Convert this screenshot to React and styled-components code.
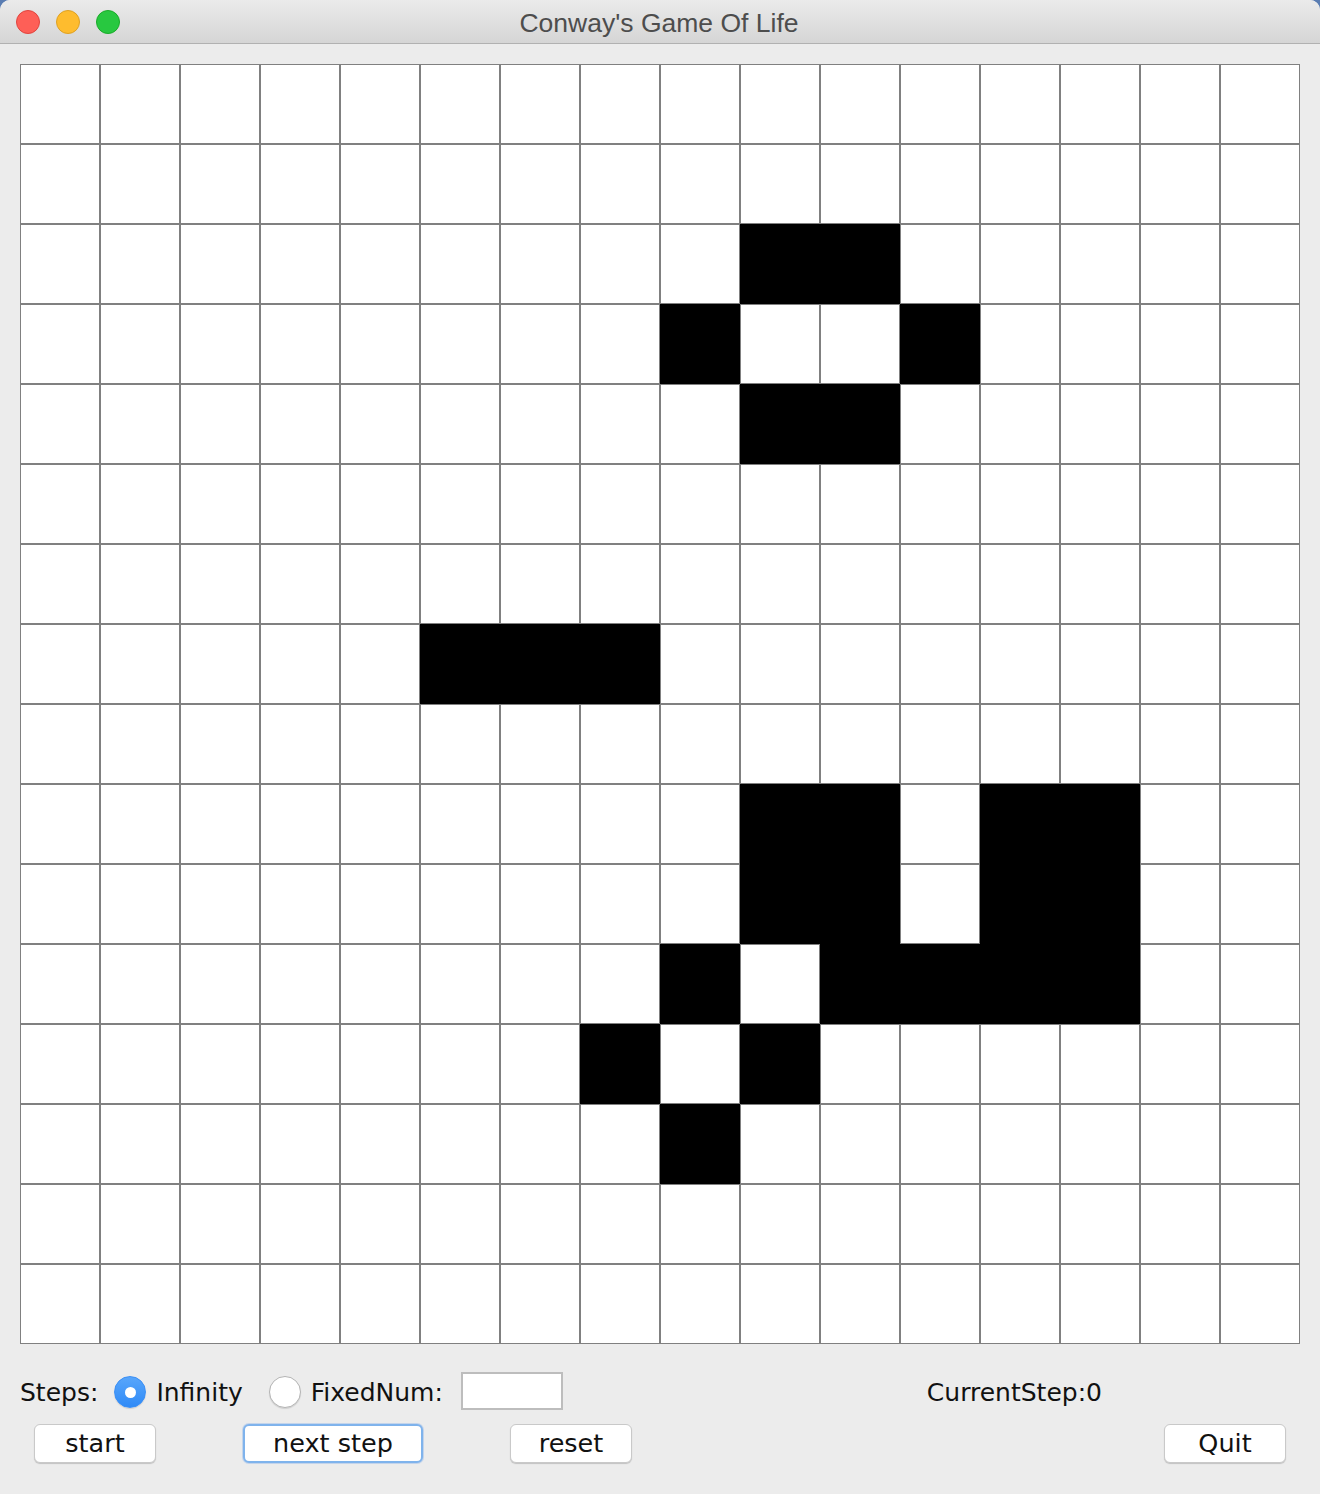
import React from "react";
import styled, { createGlobalStyle } from "styled-components";

const GlobalStyle = createGlobalStyle`
  html, body {
    margin: 0;
    padding: 0;
    background: #5a7db2;
  }
  #root {
    width: 1320px;
    height: 1494px;
  }
`;

const Window = styled.div`
  width: 1320px;
  height: 1494px;
  background: #ececec;
  border-radius: 10px 10px 0 0;
  overflow: hidden;
  display: flex;
  flex-direction: column;
  font-family: "DejaVu Sans", sans-serif;
  color: #111;
`;

const TitleBar = styled.div`
  height: 43px;
  flex: none;
  position: relative;
  display: flex;
  align-items: center;
  justify-content: center;
  background: linear-gradient(#ebebeb, #d5d5d5);
  border-bottom: 1px solid #b1b1b1;
`;

const Lights = styled.div`
  position: absolute;
  left: 16px;
  top: 10px;
  display: flex;
  gap: 16px;
`;

const Light = styled.span`
  width: 22px;
  height: 22px;
  border-radius: 50%;
  background: ${(p) => p.color};
  border: 1px solid ${(p) => p.edge};
`;

const Title = styled.span`
  font-family: "Liberation Sans", Arial, sans-serif;
  font-size: 26.5px;
  color: #4d4d4d;
  margin: 3px 0 0 -2px;
`;

const Body = styled.div`
  padding: 20px 20px 0 20px;
`;

const Board = styled.div`
  display: grid;
  grid-template-columns: repeat(16, 80px);
  grid-template-rows: repeat(16, 80px);
  width: 1280px;
  background: #fff;
`;

const Cell = styled.div`
  background: ${(p) => (p.alive ? "#000" : "#fff")};
  box-shadow: ${(p) => (p.alive ? "none" : "inset 0 0 0 1px #808080")};
`;

const Controls = styled.div`
  display: flex;
  flex-direction: column;
  padding-top: 28px;
  gap: 12px;
`;

const Row = styled.div`
  display: flex;
  align-items: center;
  height: ${(p) => p.h || 40}px;
  font-size: 25px;
`;

const Label = styled.span`
  margin-left: ${(p) => p.ml || 0}px;
  white-space: nowrap;
  line-height: 1;
`;

const Radio = styled.span`
  width: 32px;
  height: 32px;
  box-sizing: border-box;
  border-radius: 50%;
  margin-left: ${(p) => p.ml || 0}px;
  margin-right: 10px;
  display: flex;
  align-items: center;
  justify-content: center;
  flex: none;
  background: ${(p) => (p.checked ? "linear-gradient(#58a6fb, #2f8af7)" : "#fff")};
  border: 1px solid ${(p) => (p.checked ? "#3b8ff5" : "#b4b4b4")};
  box-shadow: 0 1px 1px rgba(0, 0, 0, 0.12);

  &::after {
    content: "";
    display: ${(p) => (p.checked ? "block" : "none")};
    width: 11px;
    height: 11px;
    border-radius: 50%;
    background: #fff;
  }
`;

const Field = styled.span`
  width: 102px;
  height: 38px;
  box-sizing: border-box;
  margin-left: ${(p) => p.ml || 0}px;
  margin-top: -2px;
  background: #fff;
  border: 2px solid #bdbdbd;
  flex: none;
`;

const Button = styled.button`
  width: ${(p) => p.w || 122}px;
  height: 39px;
  margin-left: ${(p) => p.ml}px;
  box-sizing: border-box;
  background: #fff;
  border: ${(p) => (p.focused ? "2px solid #7fb3ec" : "1px solid #c9c9c9")};
  border-radius: 6px;
  box-shadow: ${(p) =>
    p.focused ? "0 0 0 1px rgba(120,170,235,0.35)" : "0 1px 1px rgba(0,0,0,0.18)"};
  font-family: "DejaVu Sans", sans-serif;
  font-size: 25.5px;
  color: #111;
  padding: 0;
  line-height: 1;
  flex: none;
`;

const alive = {
  2: [9, 10],
  3: [8, 11],
  4: [9, 10],
  7: [5, 6, 7],
  9: [9, 10, 12, 13],
  10: [9, 10, 12, 13],
  11: [8, 10, 11, 12, 13],
  12: [7, 9],
  13: [8],
};

export default function App() {
  const cells = [];
  for (let r = 0; r < 16; r++) {
    for (let c = 0; c < 16; c++) {
      cells.push(<Cell key={r + "-" + c} alive={(alive[r] || []).includes(c)} />);
    }
  }

  return (
    <>
      <GlobalStyle />
      <Window>
        <TitleBar>
          <Lights>
            <Light color="#fe5f57" edge="#e0443e" />
            <Light color="#febc2e" edge="#dea123" />
            <Light color="#28c840" edge="#1aab29" />
          </Lights>
          <Title>Conway's Game Of Life</Title>
        </TitleBar>
        <Body>
          <Board>{cells}</Board>
          <Controls>
            <Row>
              <Label>Steps:</Label>
              <Radio checked ml={16} />
              <Label>Infinity</Label>
              <Radio ml={26} />
              <Label>FixedNum:</Label>
              <Field ml={18} />
              <Label ml={364}>CurrentStep:0</Label>
            </Row>
            <Row h={39}>
              <Button ml={14}>start</Button>
              <Button ml={87} w={180} focused>
                next step
              </Button>
              <Button ml={87}>reset</Button>
              <Button ml={532}>Quit</Button>
            </Row>
          </Controls>
        </Body>
      </Window>
    </>
  );
}
